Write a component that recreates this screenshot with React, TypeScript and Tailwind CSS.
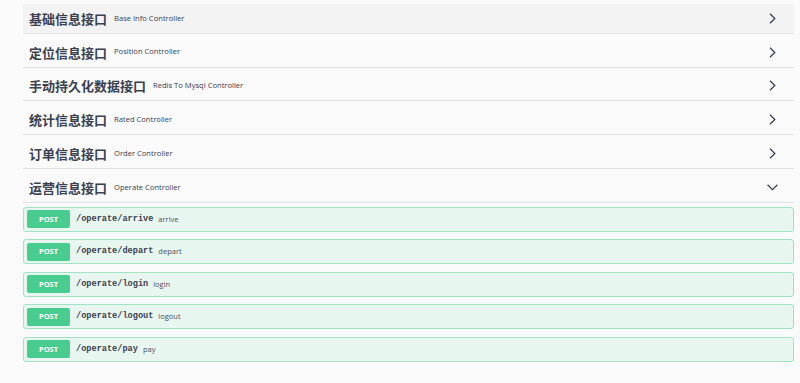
import React from 'react';

const tags = [
  { name: '基础信息接口', desc: 'Base Info Controller', open: false, hover: true },
  { name: '定位信息接口', desc: 'Position Controller', open: false },
  { name: '手动持久化数据接口', desc: 'Redis To Mysql Controller', open: false },
  { name: '统计信息接口', desc: 'Rated Controller', open: false },
  { name: '订单信息接口', desc: 'Order Controller', open: false },
  { name: '运营信息接口', desc: 'Operate Controller', open: true },
];

const ops = [
  { path: '/operate/arrive', summary: 'arrive' },
  { path: '/operate/depart', summary: 'depart' },
  { path: '/operate/login', summary: 'login' },
  { path: '/operate/logout', summary: 'logout' },
  { path: '/operate/pay', summary: 'pay' },
];

const ChevronRight = () => (
  <svg width="7" height="11" viewBox="0 0 7 11" fill="none">
    <path d="M1 0.8 L5.8 5.5 L1 10.2" stroke="#3b4151" strokeWidth="1.3" />
  </svg>
);

const ChevronDown = () => (
  <svg width="11" height="7" viewBox="0 0 11 7" fill="none">
    <path d="M0.6 0.8 L5.5 5.6 L10.4 0.8" stroke="#3b4151" strokeWidth="1.3" />
  </svg>
);

const App = () => {
  return (
    <main className="w-[800px] h-[383px] bg-[#fafafa] pl-[23px] pr-[6px] pt-[4px] overflow-hidden">
      {tags.map(tag => (
        <div key={tag.name}>
          <div
            className={`flex items-center h-[29.8px] mb-[4px] pl-[6px] pr-[16px] border-b border-[#e3e3e5] ${tag.hover ? 'bg-[#f3f3f3]' : ''}`}
          >
            <span className="font-['Noto_Sans_CJK_SC',sans-serif] text-[13px] font-bold text-[#3b4151] leading-none">
              {tag.name}
            </span>
            <span className="font-['Open_Sans',sans-serif] ml-[7px] text-[7.6px] text-[#3b4151] leading-none">
              {tag.desc}
            </span>
            <div className="ml-auto flex items-center justify-center w-[12px]">
              {tag.open ? <ChevronDown /> : <ChevronRight />}
            </div>
          </div>
          {tag.open && (
            <div>
              {ops.map(op => (
                <div
                  key={op.path}
                  className="flex items-center h-[25px] mb-[7.5px] px-[3px] rounded-[3px] border border-[#a3e2c4] bg-[#e8f6f0]"
                >
                  <span className="font-['Open_Sans',sans-serif] flex items-center justify-center w-[43px] h-[18px] rounded-[2px] bg-[#49cc90] text-white text-[7.5px] font-bold">
                    POST
                  </span>
                  <span className="font-['Liberation_Mono',monospace] ml-[6px] text-[8.6px] font-bold text-[#3b4151]">
                    {op.path}
                  </span>
                  <span className="font-['Open_Sans',sans-serif] ml-[5px] text-[7.5px] text-[#4b5161]">
                    {op.summary}
                  </span>
                </div>
              ))}
            </div>
          )}
        </div>
      ))}
    </main>
  );
};

export default App;
